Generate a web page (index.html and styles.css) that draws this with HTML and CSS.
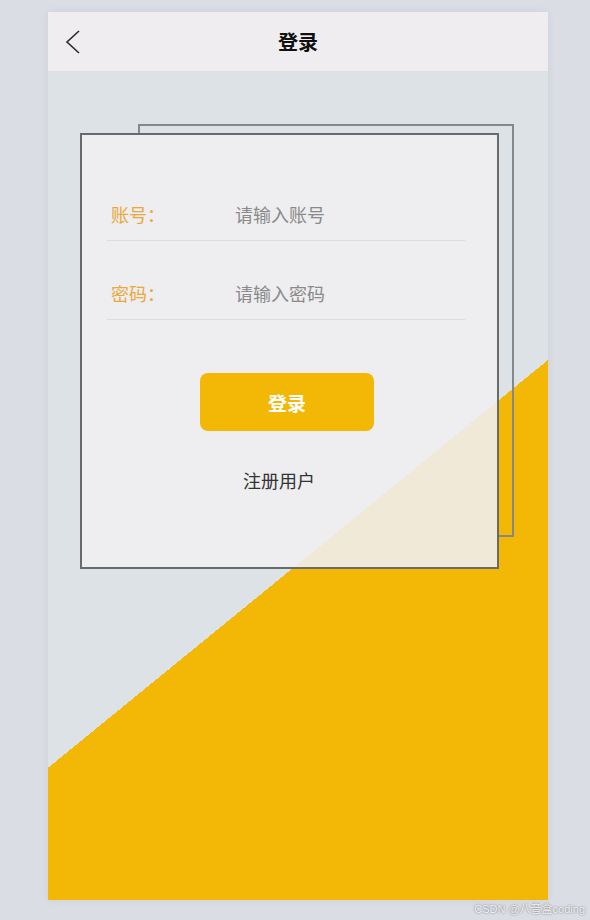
FILE: index.html
```html
<!DOCTYPE html>
<html>
<head>
    <meta charset="utf-8">
    <title>登录</title>
    <link rel="stylesheet" href="styles.css">
</head>
<body>
    <div class="phone">
        <div class="nav">
            <svg class="back" width="16" height="26" viewBox="0 0 16 26">
                <path d="M14 2 L2 13 L14 24" fill="none" stroke="#2b2b2b" stroke-width="1.6"/>
            </svg>
            <h1 class="title">登录</h1>
            <span></span>
        </div>
        <div class="content">
            <div class="card-wrap">
                <div class="card">
                    <div class="field">
                        <span class="label">账号：</span>
                        <input class="input" type="text" placeholder="请输入账号">
                    </div>
                    <div class="field">
                        <span class="label">密码：</span>
                        <input class="input" type="password" placeholder="请输入密码">
                    </div>
                    <button class="login-btn">登录</button>
                    <div class="register">注册用户</div>
                </div>
            </div>
        </div>
    </div>
    <div class="watermark">CSDN @八音盒coding</div>
</body>
</html>
```

FILE: styles.css
```css
body {
    margin: 0;
    padding: 12px 0 0;
    background-color: #dadde4;
    font-family: "Noto Sans CJK SC", "Noto Sans", sans-serif;
    height: 920px;
    box-sizing: border-box;
    overflow: hidden;
}

.phone {
    width: 500px;
    height: 888px;
    margin-left: 48px;
    display: flex;
    flex-direction: column;
    box-shadow: 0 0 8px rgba(0, 0, 0, 0.06);
}

.nav {
    height: 59px;
    background-color: #efedf0;
    display: grid;
    grid-template-columns: 1fr auto 1fr;
    align-items: center;
}

.back {
    display: block;
    margin-left: 17px;
}

.title {
    margin: 0;
    font-size: 20px;
    font-weight: bold;
    color: #111;
    line-height: 26px;
}

.content {
    flex: 1;
    background: linear-gradient(140.8deg, #dde2e6 540px, #f3b806 540px);
    padding-top: 62px;
}

.card-wrap {
    position: relative;
    width: 419px;
    height: 436px;
    margin-left: 32px;
}

/* back sheet, only the part that peeks out from behind the card */
.card-wrap::before {
    content: "";
    position: absolute;
    top: -9px;
    left: 58px;
    right: -15px;
    bottom: 32px;
    border: 2px solid #85888b;
    clip-path: polygon(0 0, 100% 0, 100% 100%, 361px 100%, 361px 9px, 0 9px);
}

.card {
    position: relative;
    box-sizing: border-box;
    width: 100%;
    height: 100%;
    padding-top: 27px;
    border: 2px solid #696a6c;
    background-color: rgba(240, 238, 240, 0.9);
}

.field {
    display: flex;
    align-items: center;
    width: 354px;
    margin-left: 25px;
    padding: 40px 0 14px 4px;
    border-bottom: 1px solid #dcdcdc;
}

.label {
    width: 124px;
    flex-shrink: 0;
    font-size: 18px;
    line-height: 24px;
    color: #e9a93b;
}

.input {
    flex: 1;
    min-width: 0;
    height: 24px;
    padding: 0;
    border: none;
    outline: none;
    background: transparent;
    font-family: "Noto Sans CJK SC", "Noto Sans", sans-serif;
    font-size: 18px;
    color: #555;
}

.input::placeholder {
    color: #8a8a8a;
}

.login-btn {
    display: block;
    width: 174px;
    height: 58px;
    margin: 53px 0 0 118px;
    border: none;
    border-radius: 8px;
    background-color: #f3b806;
    color: #fff;
    font-family: "Noto Sans CJK SC", "Noto Sans", sans-serif;
    font-size: 19px;
    font-weight: bold;
}

.register {
    margin-top: 37px;
    padding-left: 161px;
    font-size: 18px;
    line-height: 24px;
    color: #333;
}

.watermark {
    position: absolute;
    right: 5px;
    bottom: 4px;
    font-family: "Liberation Sans", "Noto Sans CJK SC", sans-serif;
    font-size: 11px;
    color: #f2f2f4;
    text-shadow: 0 0 2px rgba(0, 0, 0, 0.55);
}
```
